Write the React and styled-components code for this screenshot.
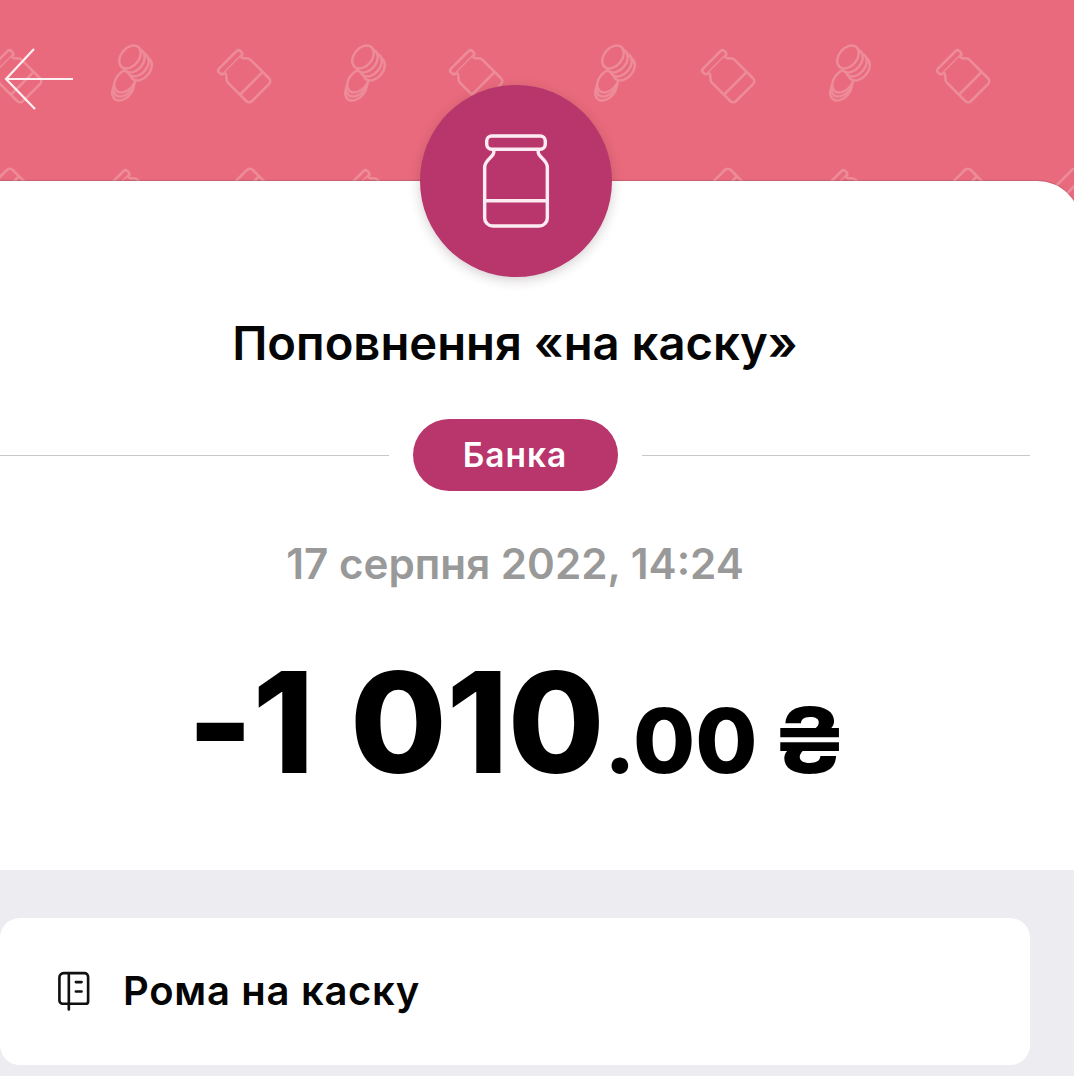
import React from "react"
import styled, { createGlobalStyle } from "styled-components"

const GlobalStyle = createGlobalStyle`
  html, body {
    margin: 0;
    padding: 0;
    background: #edecf1;
    font-family: "Inter", "Liberation Sans", sans-serif;
    -webkit-font-smoothing: antialiased;
  }
`

const Page = styled.div`
  position: relative;
  width: 1074px;
  height: 1076px;
  overflow: hidden;
  background: #edecf1;
`

const Header = styled.header`
  position: relative;
  height: 225px;
  background: #e96a7c;
`

const Pattern = styled.svg`
  position: absolute;
  left: 0;
  top: 0;
  opacity: 0.22;
`

const BackButton = styled.button`
  position: absolute;
  left: 3px;
  top: 47px;
  display: flex;
  padding: 0;
  border: 0;
  background: none;
`

const Sheet = styled.section`
  position: relative;
  width: 1081px;
  height: 689px;
  margin-top: -44px;
  background: #fff;
  border-radius: 0 44px 0 0;
  box-shadow: 0 -1px 1px rgba(70, 60, 70, 0.22);
`

const Column = styled.div`
  display: flex;
  flex-direction: column;
  align-items: center;
  width: 1030px;
`

const Avatar = styled.div`
  display: flex;
  align-items: center;
  justify-content: center;
  width: 192px;
  height: 192px;
  margin: -96px 0 0 2px;
  border-radius: 50%;
  background: #b8366b;
  box-shadow: 0 3px 12px rgba(60, 30, 45, 0.22);
`

const Title = styled.h1`
  margin: 39px 0 0;
  font-size: 47.200px;
  line-height: 54px;
  font-weight: 600;
  color: #050505;
  white-space: nowrap;
`

const DividerRow = styled.div`
  display: flex;
  align-items: center;
  gap: 24px;
  width: 100%;
  margin-top: 49px;
`

const Line = styled.div`
  flex: 1;
  height: 1px;
  background: #c8c8c8;
`

const Pill = styled.div`
  width: 205px;
  height: 72px;
  border-radius: 36px;
  background: #b8366b;
  color: #fff;
  font-size: 33.500px;
  font-weight: 600;
  line-height: 72px;
  letter-spacing: 1px;
  text-align: center;
`

const DateText = styled.div`
  margin-top: 48px;
  font-size: 42.200px;
  line-height: 50px;
  font-weight: 600;
  color: #999;
  white-space: nowrap;
`

const Amount = styled.div`
  display: flex;
  align-items: baseline;
  margin-top: 63px;
  color: #000;
  font-weight: 800;
  white-space: nowrap;
  line-height: 140px;
`

const Whole = styled.span`
  font-size: 140px;
  letter-spacing: -0.500px;
  word-spacing: 6px;
`

const Cents = styled.span`
  font-size: 90px;
`

const Currency = styled.span`
  display: inline-block;
  margin-left: 18px;
  font-size: 91px;
  font-weight: 700;
  transform: scaleX(1.14);
`

const NoteCard = styled.div`
  display: flex;
  align-items: center;
  gap: 33px;
  box-sizing: border-box;
  width: 1030px;
  height: 147px;
  margin-top: 48px;
  padding-left: 58px;
  border-radius: 20px;
  background: #fff;
`

const NoteText = styled.span`
  padding-bottom: 3px;
  font-size: 40px;
  font-weight: 600;
  color: #050505;
  letter-spacing: 0.700px;
  white-space: nowrap;
`

const JarPaths = () => (
  <>
    <rect x="4" y="2" width="58" height="13" rx="5" />
    <path d="M11 15v3c0 5-9 7-9 15v50a8 8 0 0 0 8 8h46a8 8 0 0 0 8-8V33c0-8-9-10-9-15v-3" />
    <path d="M2 66h62" />
  </>
)

// back coin first, the fill hides what lies behind the next one
const coinCentres = [
  [-9, 17],
  [-8, 13],
  [-7, 9],
  [9, -3],
  [6, -7],
  [2, -11],
  [-2, -15],
]

const CoinStack = () =>
  coinCentres.map(([cx, cy]) => (
    <ellipse key={`${cx}${cy}`} cx={cx} cy={cy} rx="13" ry="9" transform={`rotate(-50 ${cx} ${cy})`} />
  ))

const coins = [132, 365, 615, 850]
const topJars = [15, 244, 476, 728, 963]
const lowerLids = [131, 371, 849]
const lowerBases = [15, 255, 733, 973, 1080]

const PatternLayer = () => (
  <Pattern width="1074" height="225" viewBox="0 0 1074 225" fill="#e96a7c" stroke="#fff" strokeWidth="3">
    {coins.map(x => (
      <g key={x} transform={`translate(${x} 72)`} strokeWidth="2.5">
        <CoinStack />
      </g>
    ))}
    {topJars.map(x => (
      <g key={x} transform={`translate(${x} 76) rotate(-45) scale(0.52) translate(-33 -46)`} strokeWidth="5">
        <JarPaths />
      </g>
    ))}
    {lowerLids.map(x => (
      <g key={x} transform={`translate(${x} 196) rotate(-45) scale(0.52) translate(-33 -46)`} strokeWidth="5">
        <JarPaths />
      </g>
    ))}
    {lowerBases.map(x => (
      <g key={x} transform={`translate(${x} 195) rotate(135) scale(0.52) translate(-33 -46)`} strokeWidth="5">
        <JarPaths />
      </g>
    ))}
  </Pattern>
)

const App = () => (
  <>
    <GlobalStyle />
    <Page>
      <Header>
        <PatternLayer />
        <BackButton aria-label="Назад">
          <svg width="72" height="64" viewBox="0 0 72 64" fill="none" stroke="#fdf1f3" strokeWidth="2.2">
            <path d="M70 32H3M31 2 3 32l29 30" />
          </svg>
        </BackButton>
      </Header>
      <Sheet>
        <Column>
          <Avatar>
            <svg width="68" height="94" viewBox="0 0 66 93" fill="none" stroke="#fcebf2" strokeWidth="3.4">
              <JarPaths />
            </svg>
          </Avatar>
          <Title>Поповнення «на каску»</Title>
          <DividerRow>
            <Line />
            <Pill>Банка</Pill>
            <Line />
          </DividerRow>
          <DateText>17 серпня 2022, 14:24</DateText>
          <Amount>
            <Whole>-1 010</Whole>
            <Cents>.00</Cents>
            <Currency>₴</Currency>
          </Amount>
        </Column>
      </Sheet>
      <NoteCard>
        <svg width="32" height="41" viewBox="0 0 34 42" fill="none" stroke="#111" strokeWidth="2.800" strokeLinecap="round">
          <path d="M6 1.500h22a4 4 0 0 1 4 4v26a2.500 2.500 0 0 1-2.500 2.500H5a3.500 3.500 0 0 1-3.500-3.500V6A4.500 4.500 0 0 1 6 1.500Z" />
          <path d="M11.500 2v38M19 11h6M19 21h6" />
        </svg>
        <NoteText>Рома на каску</NoteText>
      </NoteCard>
    </Page>
  </>
)

export default App
